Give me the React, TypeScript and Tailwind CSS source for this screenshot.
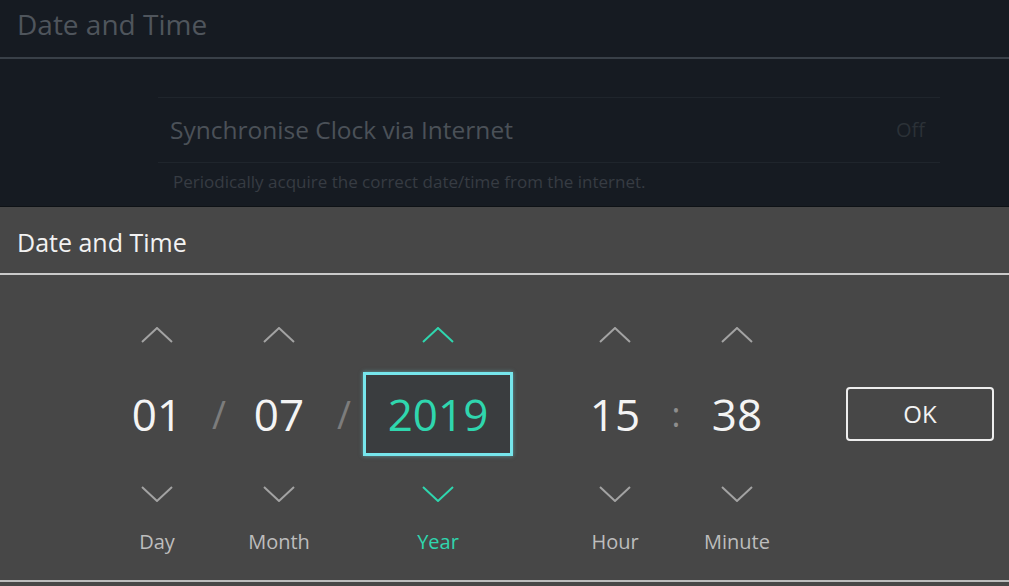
import type { ReactNode } from "react";

function Chevron({ dir, active }: { dir: "up" | "down"; active?: boolean }) {
  const pts = dir === "up" ? "1,15 16,1 31,15" : "1,1 16,15 31,1";
  return (
    <svg width="32" height="16" viewBox="0 0 32 16" className="block">
      <polyline
        points={pts}
        fill="none"
        stroke={active ? "#2fd6ae" : "#a3a3a3"}
        strokeWidth="2"
      />
    </svg>
  );
}

function Field({
  value,
  label,
  width,
  active,
}: {
  value: string;
  label: string;
  width: string;
  active?: boolean;
}) {
  return (
    <div className={`flex shrink-0 flex-col items-center ${width}`}>
      <Chevron dir="up" active={active} />
      <div
        className={`mt-[29px] flex h-[84px] items-center justify-center ${
          active
            ? "w-[150px] border-[3px] border-[#76e6ec] bg-[#3a3d3f] text-[#2fd6ae] shadow-[0_0_4px_rgba(118,230,236,0.5)]"
            : "w-full text-[#f4f4f4]"
        } text-[44px] leading-none`}
      >
        {value}
      </div>
      <div className="mt-[30px]">
        <Chevron dir="down" active={active} />
      </div>
      <div
        className={`mt-[28px] text-[20px] leading-[24px] ${
          active ? "text-[#2fd6ae]" : "text-[#bdbdbd]"
        }`}
      >
        {label}
      </div>
    </div>
  );
}

function Sep({ children, width }: { children: ReactNode; width: string }) {
  return (
    <div
      className={`flex h-[84px] shrink-0 items-center justify-center ${width} mt-[45px] text-[38px] leading-none text-[#7c7c7c]`}
    >
      {children}
    </div>
  );
}

export default function App() {
  return (
    <div
      className="h-[586px] w-[1009px] overflow-hidden"
      style={{ fontFamily: '"Open Sans", "Noto Sans", sans-serif' }}
    >
      {/* dimmed settings page behind the dialog */}
      <div className="h-[207px] border-b border-[#0e1216] bg-[#161b22]">
        <div className="flex h-[57px] items-center px-[17px] pb-[9px] text-[28px] text-[#4f555c]">
          Date and Time
        </div>
        <div className="h-[2px] bg-[#394048]" />
        <div className="ml-[158px] mt-[38px] w-[782px]">
          <div className="flex h-[66px] items-center justify-between border-y border-[#1f252c] pl-[12px] pr-[15px]">
            <span className="text-[24.5px] text-[#4b5158]">
              Synchronise Clock via Internet
            </span>
            <span className="text-[20px] text-[#2b3137]">Off</span>
          </div>
          <div className="pl-[15px] pt-[6px] text-[17px] text-[#373c43]">
            Periodically acquire the correct date/time from the internet.
          </div>
        </div>
      </div>

      {/* dialog */}
      <div className="h-[379px] bg-[#474747]">
        <div className="flex h-[66px] items-center px-[17px] pt-[5px] text-[25px] text-[#f2f2f2]">
          Date and Time
        </div>
        <div className="h-[2px] bg-[#cacaca]" />
        <div className="flex h-[305px] items-start pt-[52px]">
          <div className="w-[117px] shrink-0" />
          <Field value="01" label="Day" width="w-[80px]" />
          <Sep width="w-[44px]">/</Sep>
          <Field value="07" label="Month" width="w-[76px]" />
          <Sep width="w-[46px]">
            <span className="pl-[8px]">/</span>
          </Sep>
          <Field value="2019" label="Year" width="w-[150px]" active />
          <div className="w-[62px] shrink-0" />
          <Field value="15" label="Hour" width="w-[80px]" />
          <Sep width="w-[42px]">
            <span className="text-[34px] text-[#8e8e8e]">:</span>
          </Sep>
          <Field value="38" label="Minute" width="w-[80px]" />
          <div className="w-[69px] shrink-0" />
          <button className="mt-[60px] flex h-[54px] w-[148px] shrink-0 items-center justify-center rounded-[4px] border-2 border-[#ededed] text-[24px] text-[#f2f2f2]">
            OK
          </button>
        </div>
        <div className="h-[2px] bg-[#bdbdbd]" />
      </div>
    </div>
  );
}
